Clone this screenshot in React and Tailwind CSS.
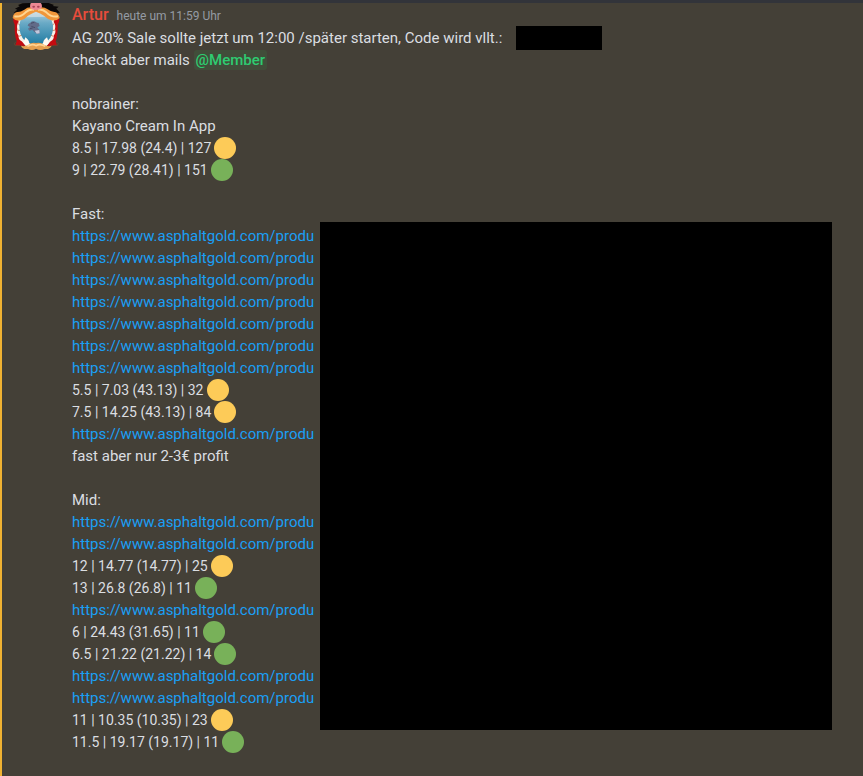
const LINK = "https://www.asphaltgold.com/produ";

const intro = [
  { text: "nobrainer:" },
  { text: "Kayano Cream In App" },
  { rate: "8.5 | 17.98 (24.4) | 127", color: "yellow" },
  { rate: "9 | 22.79 (28.41) | 151", color: "green" },
];

const fast = [
  { text: "Fast:" },
  { link: LINK },
  { link: LINK },
  { link: LINK },
  { link: LINK },
  { link: LINK },
  { link: LINK },
  { link: LINK },
  { rate: "5.5 | 7.03 (43.13) | 32", color: "yellow" },
  { rate: "7.5 | 14.25 (43.13) | 84", color: "yellow" },
  { link: LINK },
  { text: "fast aber nur 2-3€ profit" },
];

const mid = [
  { text: "Mid:" },
  { link: LINK },
  { link: LINK },
  { rate: "12 | 14.77 (14.77) | 25", color: "yellow" },
  { rate: "13 | 26.8 (26.8) | 11", color: "green" },
  { link: LINK },
  { rate: "6 | 24.43 (31.65) | 11", color: "green" },
  { rate: "6.5 | 21.22 (21.22) | 14", color: "green" },
  { link: LINK },
  { link: LINK },
  { rate: "11 | 10.35 (10.35) | 23", color: "yellow" },
  { rate: "11.5 | 19.17 (19.17) | 11", color: "green" },
];

function Avatar() {
  return (
    <svg viewBox="30 9 156 150" className="w-[52px] h-[50px] shrink-0" role="img" aria-label="Artur">
      <defs>
        <linearGradient id="water" x1="0" y1="0" x2="0" y2="1">
          <stop offset="0" stopColor="#b9d3df" />
          <stop offset="0.35" stopColor="#6aaac6" />
          <stop offset="1" stopColor="#1f7ba2" />
        </linearGradient>
      </defs>
      {/* hair */}
      <path d="M90 9 L68 10 L54 15 L59 19 L45 26 L52 29 L41 38 L60 40 L92 27Z" fill="#0b0808" />
      <path d="M124 9 L146 9 L162 15 L158 18 L176 20 L169 26 L180 38 L172 39 L179 49 L160 42 L124 27Z" fill="#0b0808" />
      {/* lips */}
      <path d="M42 52 Q37 62 44 74 Q43 105 50 124 L46 136 L76 138 L60 100 L62 52Z" fill="#c40b10" />
      <path d="M175 52 Q181 62 173 74 Q174 105 167 124 L171 136 L141 138 L157 100 L155 52Z" fill="#c40b10" />
      {/* teeth */}
      <path
        d="M61 45 Q51 55 56 66 Q49 75 52 87 Q48 98 56 107 Q54 118 65 124 L76 136 L108 142 L141 136 L152 124 Q163 118 161 107 Q169 98 165 87 Q168 75 161 66 Q166 55 156 45 L108 28Z"
        fill="#f7f1e8"
      />
      <path
        d="M53 70 L61 76 M52 90 L61 92 M57 109 L66 105 M164 70 L156 76 M165 90 L156 92 M160 109 L151 105"
        stroke="#cf8a60"
        strokeWidth="3"
      />
      <path d="M82 36 Q108 30 136 36 Q154 48 159 76 Q161 107 142 124 Q108 145 76 124 Q57 107 58 76 Q61 49 82 36Z" fill="url(#water)" />
      <path d="M80 39 Q108 32 138 39 L147 50 L71 52Z" fill="#d8e3e6" opacity="0.65" />
      {/* seal */}
      <path
        d="M91 68 Q97 61 106 65 L111 68 L116 69 L119 78 L112 82 L119 91 L120 99 L113 102 L104 97 L97 90 L88 92 L84 86 L90 81 L83 77 L85 72Z"
        fill="#626b88"
      />
      <path d="M93 70 L103 67 M94 79 L105 83 M90 86 L98 84" stroke="#484e69" strokeWidth="3" />
      <path d="M104 92 L118 90 L119 100 L110 101Z" fill="#c2c8dc" />
      {/* moustaches */}
      <path
        d="M104 23 Q84 19 73 29 Q61 37 51 36 Q39 40 38 54 Q48 65 63 61 Q75 57 84 47 Q96 39 108 35 Q121 39 132 47 Q142 57 154 61 Q169 64 179 54 Q177 40 165 36 Q155 37 143 28 Q132 19 112 23Z"
        fill="#f0963a"
      />
      <path d="M43 49 Q61 53 77 37 Q88 27 102 29 M174 49 Q155 53 139 37 Q128 27 114 29" fill="none" stroke="#ffd693" strokeWidth="6" />
      <path d="M76 112 Q90 121 88 137 L79 140 L70 128Z M141 112 Q127 121 129 137 L138 140 L147 128Z" fill="#fffaf2" />
      <path
        d="M108 129 Q94 126 86 134 Q74 141 63 137 Q67 149 84 147 Q97 153 108 146 Q120 153 134 147 Q149 149 155 137 Q144 141 132 134 Q123 126 108 129Z"
        fill="#e5a050"
      />
      <path d="M82 139 Q97 130 108 137 Q121 130 136 139" fill="none" stroke="#ffd392" strokeWidth="5" />
      <path d="M49 125 Q39 129 45 136 L60 136 M168 125 Q179 129 173 136 L158 136" fill="none" stroke="#70482e" strokeWidth="2" />
      {/* nose */}
      <path d="M94 9 L122 9 Q130 19 122 27 Q108 33 94 27 Q86 19 94 9Z" fill="#ed8894" />
      <ellipse cx="101" cy="20" rx="4" ry="3" fill="#a84356" />
      <ellipse cx="115" cy="20" rx="4" ry="3" fill="#a84356" />
    </svg>
  );
}

function Dot({ color }) {
  return (
    <svg
      viewBox="0 0 22 22"
      className={`size-[22px] ${color === "green" ? "text-[#78b159]" : "text-[#fdcb58]"}`}
      role="img"
      aria-label={color}
    >
      <circle cx="11" cy="11" r="11" fill="currentColor" />
    </svg>
  );
}

function Line({ line }) {
  if (line.link) {
    return (
      <p>
        <a href={line.link} className="text-[#1a9ff5] hover:underline">
          {line.link}
        </a>
      </p>
    );
  }
  if (line.rate) {
    return (
      <p className="flex items-center gap-[3px] text-sm leading-[22px]">
        {line.rate}
        <Dot color={line.color} />
      </p>
    );
  }
  return <p>{line.text}</p>;
}

function Lines({ lines }) {
  return (
    <div>
      {lines.map((line, i) => (
        <Line key={i} line={line} />
      ))}
    </div>
  );
}

export default function App() {
  return (
    <div className="min-h-screen flex flex-col bg-[#444037] border-t-3 border-[#32343a] font-['Roboto',sans-serif] text-[15px] leading-[22px] text-[#dbdee1]">
      <article className="grow flex items-start gap-2.5 border-l-2 border-[#f0b232] pl-2 pb-5">
        <Avatar />

        <div className="grow min-w-0 pt-px">
          <header className="flex items-baseline gap-2">
            <h3 className="text-base leading-[22px] font-medium text-[#e74c3c]">Artur</h3>
            <time className="text-xs leading-[22px] text-[#949ba4]">heute um 11:59 Uhr</time>
          </header>

          <div className="flex flex-col gap-[22px]">
            <div>
              <p className="flex items-center gap-3.5 h-[22px]">
                AG 20% Sale sollte jetzt um 12:00 /später starten, Code wird vllt.:
                <span className="w-[86px] h-6 bg-black" />
              </p>
              <p>
                checkt aber mails{" "}
                <span className="rounded-[3px] bg-[#414d3a] px-0.5 py-px font-medium text-[#2ecc71]">@Member</span>
              </p>
            </div>

            <Lines lines={intro} />

            <div className="relative flex flex-col gap-[22px]">
              <Lines lines={fast} />
              <Lines lines={mid} />
              {/* hides the rest of the links */}
              <div className="absolute top-[19px] bottom-[23px] left-[248px] right-[31px] bg-black" />
            </div>
          </div>
        </div>
      </article>
    </div>
  );
}
